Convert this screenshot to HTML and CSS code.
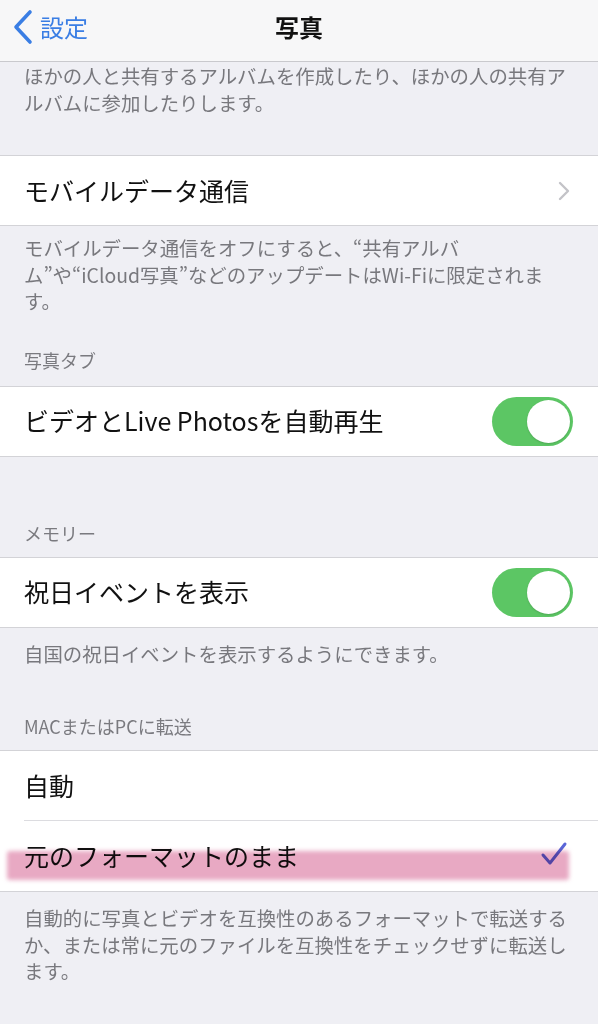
FILE: index.html
```html
<!DOCTYPE html>
<html lang="ja">
<head>
  <meta charset="UTF-8">
  <title>写真</title>
  <link rel="stylesheet" href="styles.css">
</head>
<body>
  <header class="navbar">
    <a class="back" href="#">
      <svg width="22" height="36" viewBox="0 0 22 36">
        <path d="M18 3 L4 18 L18 33" fill="none" stroke="#3a7ee4" stroke-width="3.6" stroke-linecap="round" stroke-linejoin="round"/>
      </svg>
      <span>設定</span>
    </a>
    <h1>写真</h1>
  </header>

  <main class="settings">
    <p class="note note-top">ほかの人と共有するアルバムを作成したり、ほかの人の共有ア<br>ルバムに参加したりします。</p>

    <section class="group">
      <div class="row">
        <span class="label">モバイルデータ通信</span>
        <svg class="chevron" width="12" height="20" viewBox="0 0 12 20">
          <path d="M2 2 L10 10 L2 18" fill="none" stroke="#c3c3c8" stroke-width="2.4" stroke-linecap="round" stroke-linejoin="round"/>
        </svg>
      </div>
    </section>
    <p class="note">モバイルデータ通信をオフにすると、“共有アルバ<br>ム”や“iCloud写真”などのアップデートはWi-Fiに限定されま<br>す。</p>

    <h2 class="section-title">写真タブ</h2>
    <section class="group">
      <div class="row">
        <span class="label">ビデオとLive Photosを自動再生</span>
        <span class="toggle on"><span class="knob"></span></span>
      </div>
    </section>

    <h2 class="section-title spaced">メモリー</h2>
    <section class="group">
      <div class="row">
        <span class="label">祝日イベントを表示</span>
        <span class="toggle on"><span class="knob"></span></span>
      </div>
    </section>
    <p class="note loose">自国の祝日イベントを表示するようにできます。</p>

    <h2 class="section-title wide">MACまたはPCに転送</h2>
    <section class="group">
      <div class="row">
        <span class="label">自動</span>
      </div>
      <div class="row divided">
        <span class="label">元のフォーマットのまま</span>
        <svg class="check" width="28" height="26" viewBox="0 0 28 26">
          <path d="M3 14 L10 22 L25 3" fill="none" stroke="#5a66d8" stroke-width="3" stroke-linecap="round" stroke-linejoin="round"/>
        </svg>
        <span class="marker"></span>
      </div>
    </section>
    <p class="note loose">自動的に写真とビデオを互換性のあるフォーマットで転送する<br>か、または常に元のファイルを互換性をチェックせずに転送し<br>ます。</p>
  </main>
</body>
</html>
```

FILE: styles.css
```css
body {
  margin: 0;
  background-color: #efeff4;
  font-family: "Noto Sans CJK JP", "Noto Sans", sans-serif;
  color: #111;
}
.navbar {
  height: 62px;
  background-color: #f7f7f8;
  border-bottom: 1px solid #c9c9cd;
  display: flex;
  align-items: center;
  justify-content: center;
  position: relative;
  box-sizing: border-box;
}
.navbar h1 {
  margin: 0;
  font-size: 24px;
  font-weight: 700;
  margin-top: -8px;
}
.back {
  position: absolute;
  left: 12px;
  top: 9px;
  display: flex;
  align-items: center;
  gap: 6px;
  color: #3a7ee4;
  text-decoration: none;
  font-size: 24px;
}
.back span {
  margin-top: -2px;
}
.settings {
  padding-bottom: 40px;
}
.note {
  margin: 0;
  padding: 9px 24px 0;
  font-size: 19.4px;
  line-height: 26.5px;
  color: #78787d;
}
.note-top {
  padding-top: 1px;
  margin-bottom: 39px;
}
.group + .note.loose {
  padding-top: 13px;
}
.section-title {
  margin: 32px 0 0;
  padding: 0 24px 13px;
  font-size: 18px;
  font-weight: 400;
  line-height: 26px;
  color: #7a7a7f;
}
.section-title.spaced {
  margin-top: 63px;
  padding-bottom: 11px;
}
.section-title.wide {
  margin-top: 46px;
  padding-bottom: 11px;
}
.group {
  background-color: #fff;
  border-top: 1px solid #d3d3d7;
  border-bottom: 1px solid #d3d3d7;
}
.group + .note {
  padding-top: 9px;
}
.row {
  height: 69px;
  display: flex;
  align-items: center;
  justify-content: space-between;
  padding: 0 24px;
  position: relative;
}
.row.divided {
  height: 70px;
  border-top: 1px solid #dcdce0;
  margin-left: 24px;
  padding-left: 0;
}
.label {
  font-size: 25px;
  margin-top: -2px;
}
.chevron {
  margin-right: 4px;
}
.check {
  margin-right: 6px;
  margin-top: -4px;
}
.toggle {
  width: 81px;
  height: 49px;
  border-radius: 25px;
  background-color: #5cc664;
  display: flex;
  align-items: center;
  justify-content: flex-end;
  padding: 3px;
  box-sizing: border-box;
  margin-right: 1px;
}
.knob {
  width: 43px;
  height: 43px;
  border-radius: 50%;
  background-color: #fff;
  box-shadow: 0 1px 2px rgba(0, 0, 0, 0.15);
}
.marker {
  position: absolute;
  left: -17px;
  right: 29px;
  top: 30px;
  height: 29px;
  background-color: #e8a9c3;
  mix-blend-mode: multiply;
  filter: blur(2px);
  border-radius: 3px;
}
```
